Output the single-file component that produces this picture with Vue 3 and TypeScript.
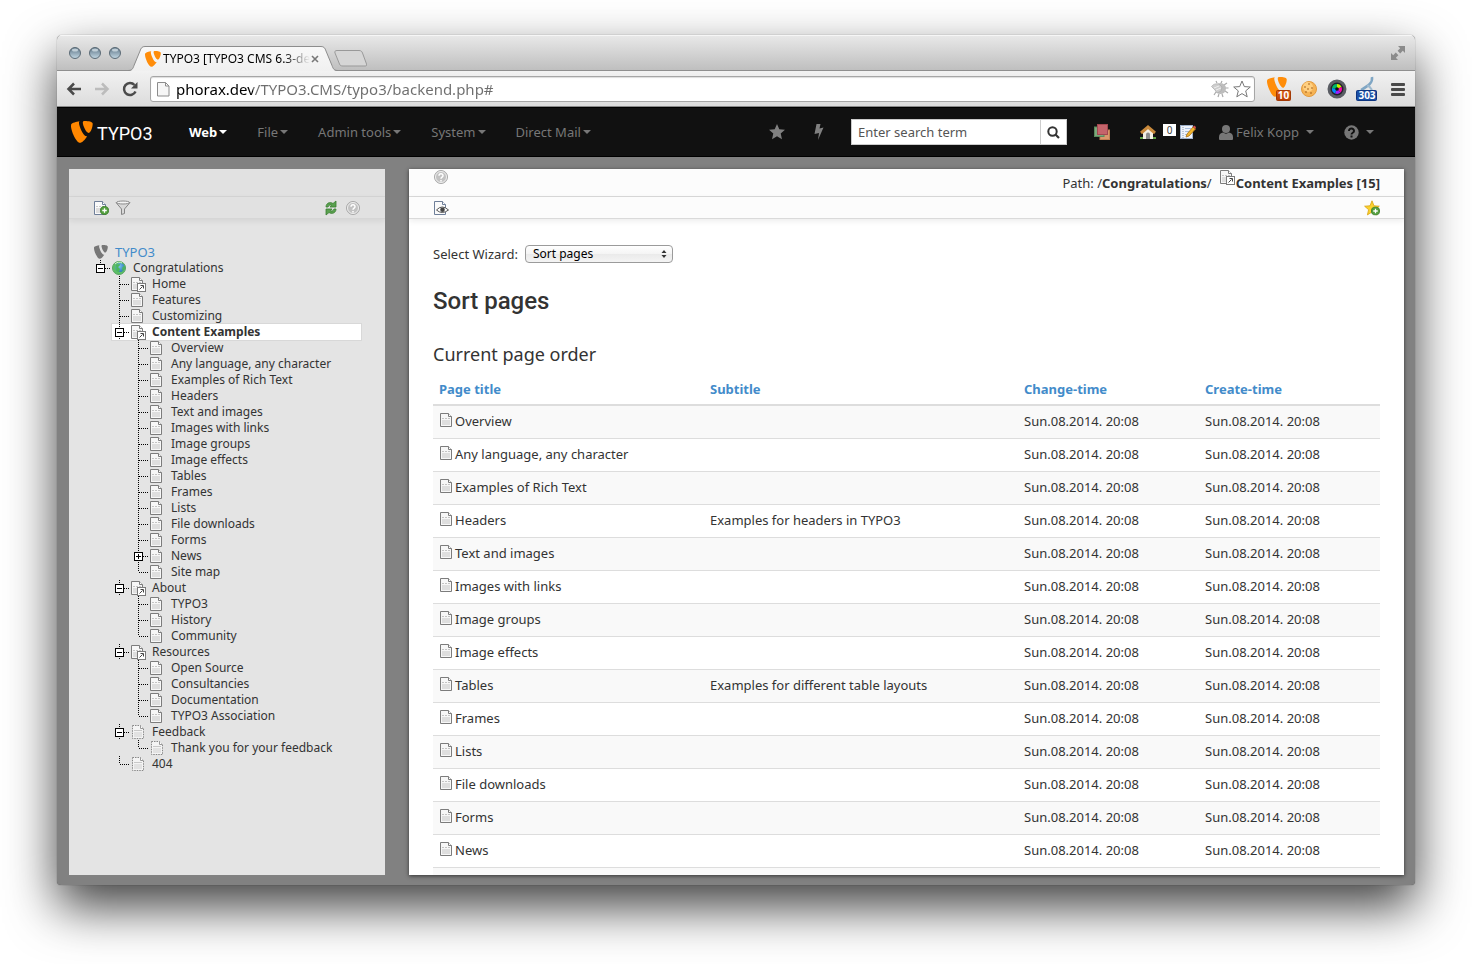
<script setup lang="ts">
import { ref } from 'vue'

type Joint = 'tee' | 'end' | 'minus' | 'minus-first' | 'plus'

interface TreeNode {
  label: string
  level: 1 | 2 | 3
  joint: Joint
  icon: string
  active?: boolean
}

interface PageRow {
  title: string
  subtitle: string
}

const leaf = (label: string, joint: Joint = 'tee', icon = 'page'): TreeNode => ({ label, level: 3, joint, icon })

const tree: TreeNode[] = [
  { label: 'Congratulations', level: 1, joint: 'minus-first', icon: 'globe' },
  { label: 'Home', level: 2, joint: 'tee', icon: 'shortcut' },
  { label: 'Features', level: 2, joint: 'tee', icon: 'page' },
  { label: 'Customizing', level: 2, joint: 'tee', icon: 'page' },
  { label: 'Content Examples', level: 2, joint: 'minus', icon: 'shortcut', active: true },
  leaf('Overview'),
  leaf('Any language, any character'),
  leaf('Examples of Rich Text'),
  leaf('Headers'),
  leaf('Text and images'),
  leaf('Images with links'),
  leaf('Image groups'),
  leaf('Image effects'),
  leaf('Tables'),
  leaf('Frames'),
  leaf('Lists'),
  leaf('File downloads'),
  leaf('Forms'),
  leaf('News', 'plus'),
  leaf('Site map', 'end'),
  { label: 'About', level: 2, joint: 'minus', icon: 'shortcut' },
  leaf('TYPO3'),
  leaf('History'),
  leaf('Community', 'end'),
  { label: 'Resources', level: 2, joint: 'minus', icon: 'shortcut' },
  leaf('Open Source'),
  leaf('Consultancies'),
  leaf('Documentation'),
  leaf('TYPO3 Association', 'end'),
  { label: 'Feedback', level: 2, joint: 'minus', icon: 'hidden' },
  leaf('Thank you for your feedback', 'end', 'hidden'),
  { label: '404', level: 2, joint: 'end', icon: 'hidden' },
]

const subtitles: Record<string, string> = {
  Headers: 'Examples for headers in TYPO3',
  Tables: 'Examples for different table layouts',
}

const rows: PageRow[] = [
  'Overview',
  'Any language, any character',
  'Examples of Rich Text',
  'Headers',
  'Text and images',
  'Images with links',
  'Image groups',
  'Image effects',
  'Tables',
  'Frames',
  'Lists',
  'File downloads',
  'Forms',
  'News',
].map((title) => ({ title, subtitle: subtitles[title] ?? '' }))

const stamp = 'Sun.08.2014. 20:08'
const menus: string[] = ['Web', 'File', 'Admin tools', 'System', 'Direct Mail']
const address = ref('phorax.dev/TYPO3.CMS/typo3/backend.php#')
const wizard = ref('Sort pages')
const search = ref('')
</script>

<template>
  <svg class="defs" aria-hidden="true">
    <defs>
      <linearGradient id="lens" x1="0" y1="0" x2="0" y2="1">
        <stop offset="0" stop-color="#5d7385" />
        <stop offset="1" stop-color="#c3d8e4" />
      </linearGradient>
      <linearGradient id="tab-fill" x1="0" y1="0" x2="0" y2="1">
        <stop offset="0" stop-color="#f8f8f8" />
        <stop offset="1" stop-color="#f0f0f0" />
      </linearGradient>
      <linearGradient id="badge-orange" x1="0" y1="0" x2="0" y2="1">
        <stop offset="0" stop-color="#e0621c" />
        <stop offset="1" stop-color="#b83c00" />
      </linearGradient>
      <radialGradient id="sea" cx=".4" cy=".35" r=".7">
        <stop offset="0" stop-color="#7fc4f0" />
        <stop offset="1" stop-color="#2a78b8" />
      </radialGradient>
      <symbol id="typo3" viewBox="0 0 22 22">
        <path d="M16.2 15.200c-.3.1-.6.1-1 .1-3 0-7.200-10.200-7.200-13.200 0-1.100.3-1.500.7-1.800C5.100.7 1.200 1.900.2 3.300c-.1.4-.2.9-.2 1.700C0 9.700 5.200 21.800 9 21.800c2 0 5-3.100 7.200-6.600M13.900 0c3.500 0 7.800.6 7.800 2.700 0 4.200-2.400 9.200-4 9.200-2.600 0-5.900-7.400-5.900-10.400 0-1.300.8-1.500 2.100-1.500" />
      </symbol>
      <symbol id="page" viewBox="0 0 16 16">
        <path d="M.5 1.500h8l3 3v10H.5z" fill="#f7f7f7" stroke="#7c7c7c" />
        <path d="M8.500 1.500v3h3" fill="#fff" stroke="#7c7c7c" />
        <path d="M2 6.500h8" stroke="#c4c4c4" stroke-dasharray="2 1" />
        <path d="M2 8h8v5H2z" fill="#dedede" />
      </symbol>
      <symbol id="shortcut" viewBox="0 0 16 16">
        <use href="#page" width="16" height="16" />
        <rect x="6.500" y="7.500" width="8" height="8" fill="#fff" stroke="#7b7b7b" />
        <path d="M8.500 13.500l3-3M9.500 9.500h3v3" fill="none" stroke="#444" />
      </symbol>
      <symbol id="hidden" viewBox="0 0 16 16">
        <path d="M1.500 1.500h8l3 3v10h-11z" fill="#f4f4f4" stroke="#888" stroke-dasharray="1.500 1" />
        <path d="M9.500 1.500v3h3" fill="#fff" stroke="#999" />
        <path d="M3 6.500h8" stroke="#c8c8c8" />
        <path d="M3 8h8v5H3z" fill="#e2e2e2" />
      </symbol>
      <symbol id="globe" viewBox="0 0 16 16">
        <circle cx="7" cy="8" r="6.500" fill="#5cbf66" stroke="#55a35f" />
        <circle cx="8" cy="7.500" r="4.500" fill="url(#sea)" />
        <path d="M4 4.500L8 4 7.500 6 6 7l2 2-1 3-2.500-1zM10.500 7l2-1v3L10 11z" fill="#4cb857" />
        <path d="M3 4c2-2 5-2.500 7-1" stroke="#d4f4cf" fill="none" />
      </symbol>
      <symbol id="help" viewBox="0 0 16 16">
        <circle cx="8" cy="8" r="6.500" fill="#c2c2c2" stroke="#a8a8a8" />
        <circle cx="8" cy="8" r="5.500" fill="none" stroke="#eee" />
        <path d="M6 6.800c0-3 4.200-2.500 4 0C10 8.200 8 8 8 9.800M8 11v1.500" fill="none" stroke="#fff" stroke-width="1.500" />
      </symbol>
      <symbol id="plus-dot" viewBox="0 0 10 10">
        <circle cx="5" cy="5" r="4.500" fill="#55a040" stroke="#3d7f2c" />
        <path d="M5 2.500v5M2.500 5h5" stroke="#fff" stroke-width="1.400" />
      </symbol>
    </defs>
  </svg>

  <div class="desktop">
    <div class="window">
      <header class="titlebar">
        <div class="lights">
          <button v-for="name in ['Close', 'Minimise', 'Zoom']" :key="name" type="button" :aria-label="name">
            <svg width="14" height="14" viewBox="0 0 14 14">
              <circle cx="7" cy="7" r="5.500" fill="url(#lens)" stroke="#5c6b76" />
              <ellipse cx="7" cy="4" rx="3" ry="1.500" fill="#dfe9ef" opacity=".7" />
            </svg>
          </button>
        </div>
        <div class="tab">
          <svg class="tab-shape" width="210" height="25" viewBox="0 0 210 25" aria-hidden="true">
            <path d="M0 25c4 0 5-2 6-5L12 5c1-3 2-4.500 5-4.500h176c3 0 4 1.500 5 4.500l6 15c1 3 2 5 6 5z" fill="url(#tab-fill)" />
            <path d="M0 24.500c4 0 5-2 6-5L12 5c1-3 2-4.500 5-4.500h176c3 0 4 1.500 5 4.500l6 14.500c1 3 2 5 6 5" fill="none" stroke="#8d8d8d" />
          </svg>
          <div class="tab-body">
            <svg class="orange" width="16" height="16"><use href="#typo3" /></svg>
            <span class="tab-title">TYPO3 [TYPO3 CMS 6.3-de</span>
            <button type="button" aria-label="Close tab">
              <svg width="8" height="8" viewBox="0 0 8 8"><path d="M1 1l6 6M7 1L1 7" stroke="#777" stroke-width="1.600" /></svg>
            </button>
          </div>
        </div>
        <button class="new-tab" type="button" aria-label="New tab">
          <svg width="33" height="17" viewBox="0 0 33 17">
            <path d="M3 .5h22c2 0 3 1 3.500 2.500l4 11c.4 1.500 0 2-1.500 2H9c-2 0-3-.5-3.500-2L1 3C.5 1.500 1 .5 3 .5z" fill="#d6d6d6" stroke="#999" />
          </svg>
        </button>
        <button class="expand" type="button" aria-label="Full screen">
          <svg width="16" height="16" viewBox="0 0 16 16" fill="#8b8b8b">
            <path d="M8 1h7v7l-2.200-2.200-2.600 2.600-2.600-2.600 2.600-2.600zM1 8l2.200 2.200 2.600-2.600 2.600 2.600-2.600 2.600L8 15H1z" />
          </svg>
        </button>
      </header>

      <div class="toolbar">
        <button type="button" aria-label="Back">
          <svg width="16" height="16" viewBox="0 0 16 16"><path d="M15 8H3M8 2.500L2.500 8 8 13.500" fill="none" stroke="#4a4a4a" stroke-width="2.500" /></svg>
        </button>
        <button type="button" aria-label="Forward">
          <svg width="16" height="16" viewBox="0 0 16 16"><path d="M1 8h12M8 2.500L13.500 8 8 13.500" fill="none" stroke="#bcbcbc" stroke-width="2.500" /></svg>
        </button>
        <button type="button" aria-label="Reload">
          <svg width="16" height="16" viewBox="0 0 16 16">
            <path d="M13.500 10.500A6 6 0 1 1 12.500 4" fill="none" stroke="#4a4a4a" stroke-width="2.500" />
            <path d="M15.500 1v6.500H9z" fill="#4a4a4a" />
          </svg>
        </button>
        <div class="omnibox">
          <svg width="13" height="16" viewBox="0 0 13 16"><path d="M.5 1.500h8l3.500 3.500v10H.5zM8.500 1.500V5H12" fill="#f6f6f6" stroke="#8c8c8c" /></svg>
          <input v-model="address" type="text" aria-label="Address" />
          <svg width="18" height="18" viewBox="0 0 18 18">
            <path d="M6 3L5 1M10 3l1-2M13 5l3-2M14 8h3.500M14 11l3 2M11 14l1 3M8 14l-1 3M5 12l-2 3" stroke="#a9a9a9" stroke-width="1.200" />
            <circle cx="9.500" cy="8.500" r="5.500" fill="#bdbdbd" />
            <path d="M.5 6.500Q3 3 8 4l3 3-1 4-4 2-2-3z" fill="#cdcdcd" stroke="#aaa" stroke-width=".7" />
            <path d="M3 8l5-2M5 10l5-2" stroke="#eee" />
          </svg>
          <svg width="18" height="18" viewBox="0 0 18 18"><path d="M9 1l2.300 5.600 6 .4-4.600 3.900 1.500 5.900L9 13.600l-5.200 3.200 1.500-5.900L.7 7l6-.4z" fill="#fff" stroke="#777" stroke-linejoin="round" /></svg>
        </div>
        <div class="extensions">
          <button type="button" class="ext" aria-label="TYPO3 issues">
            <svg width="24" height="26" viewBox="0 0 24 26">
              <use href="#typo3" x="0" y="1" width="20" height="20" fill="#ff8d0a" />
              <rect x="9.500" y="14.500" width="14" height="10" rx="1" fill="url(#badge-orange)" stroke="#a33a06" />
            </svg>
            <span class="badge">10</span>
          </button>
          <button type="button" aria-label="Cookies">
            <svg width="18" height="18" viewBox="0 0 18 18">
              <circle cx="9" cy="9" r="7.500" fill="#f5b355" stroke="#e39a3c" />
              <circle cx="8" cy="7" r="5" fill="#ffcf80" />
              <g fill="#9a5413"><circle cx="5" cy="7" r=".8" /><circle cx="9" cy="4" r=".8" /><circle cx="12" cy="8" r=".8" /><circle cx="8" cy="9" r=".8" /><circle cx="6" cy="12" r=".8" /><circle cx="11" cy="13" r=".8" /></g>
            </svg>
          </button>
          <button type="button" aria-label="Colour picker">
            <svg width="20" height="20" viewBox="0 0 20 20">
              <circle cx="10" cy="10" r="8" fill="#22242a" stroke="#5a5d64" stroke-width="3" />
              <path d="M10 10V5a5 5 0 0 1 4.500 3z" fill="#c8f000" /><path d="M10 10l4.500-2a5 5 0 0 1-1 5.500z" fill="#f0a" />
              <path d="M10 10l3.500 3.500A5 5 0 0 1 8 14.500z" fill="#92f" /><path d="M10 10l-2 4.500A5 5 0 0 1 5 9z" fill="#08f" /><path d="M10 10L5 9a5 5 0 0 1 5-4z" fill="#0b6" />
              <circle cx="10" cy="10" r="1.800" fill="#111" />
            </svg>
          </button>
          <button type="button" class="ext" aria-label="Feed">
            <svg width="22" height="26" viewBox="0 0 22 26">
              <path d="M16 1c1 6-4 9-11 13" fill="none" stroke="#7fa6c4" stroke-width="2.500" /><path d="M11 9c2 1 4 3 5 5" fill="none" stroke="#9db9cf" stroke-width="2" />
              <rect x=".5" y="14.500" width="20" height="10" rx="1" fill="#1b4fa5" stroke="#0d3580" />
            </svg>
            <span class="badge wide">303</span>
          </button>
          <button type="button" aria-label="Menu">
            <svg width="14" height="14" viewBox="0 0 14 14" fill="#4a4a4a"><rect y="1" width="14" height="3" rx="1" /><rect y="6" width="14" height="3" rx="1" /><rect y="11" width="14" height="3" rx="1" /></svg>
          </button>
        </div>
      </div>

      <div class="topbar">
        <a class="brand" href="#">
          <svg width="22" height="22"><use href="#typo3" /></svg>
          <span>TYPO3</span>
        </a>
        <nav class="menus">
          <button v-for="(menu, i) in menus" :key="menu" type="button" :class="{ current: i === 0 }">{{ menu }}<i class="caret"></i></button>
        </nav>
        <div class="tools">
          <button type="button" class="star" aria-label="Bookmarks">
            <svg width="16" height="16" viewBox="0 0 16 16"><path d="M8 0l2.300 5.300 5.700.5-4.300 3.800L13 15.300 8 12.300l-5 3 1.300-5.700L0 5.800l5.700-.5z" fill="#808080" /></svg>
          </button>
          <button type="button" class="bolt" aria-label="Clear cache">
            <svg width="10" height="16" viewBox="0 0 10 16"><path d="M2.500 0h4L5.500 4.500l4-1L4 16l1-7-4.500 1z" fill="#808080" /></svg>
          </button>
          <form class="search" @submit.prevent>
            <input v-model="search" type="text" placeholder="Enter search term" aria-label="Search" />
            <button type="submit" aria-label="Search">
              <svg width="13" height="13" viewBox="0 0 13 13"><circle cx="5.500" cy="5.500" r="4.200" fill="none" stroke="#333" stroke-width="2" /><path d="M8.500 8.500L12 12" stroke="#333" stroke-width="2.200" /></svg>
            </button>
          </form>
          <button type="button" class="workspace" aria-label="Workspaces">
            <svg width="16" height="16" viewBox="0 0 16 16">
              <rect x="6" y="6" width="9.500" height="9.500" fill="#d9986c" stroke="#c07d50" /><rect x=".5" y="3" width="9.500" height="9.500" fill="#7ba87b" stroke="#5c8a5c" /><rect x="3.500" y=".5" width="10" height="10" fill="#c5646b" stroke="#a34850" />
            </svg>
          </button>
          <button type="button" class="house" aria-label="Live view">
            <svg width="16" height="16" viewBox="0 0 16 16">
              <path d="M0 15h16v-2H0z" fill="#5fa345" /><path d="M3 8l5-5 5 5v7H3z" fill="#f3efe4" /><path d="M6 10.500a2 2 0 0 1 4 0V15H6z" fill="#8c8c8c" />
              <path d="M1 9l7-6 7 6" fill="none" stroke="#c98a3c" stroke-width="3" />
            </svg>
          </button>
          <span class="count">0</span>
          <button type="button" class="note" aria-label="Tasks">
            <svg width="16" height="15" viewBox="0 0 16 15">
              <rect x=".5" y=".5" width="12" height="13" fill="#eef3fb" stroke="#9fb2cc" /><path d="M3 0v14" stroke="#8c9bb0" stroke-dasharray="1 1" /><path d="M5 3.500h6M5 6.500h5M5 9.500h3" stroke="#a9bfdf" />
              <path d="M6 12l1-3 6-7 2.500 2-6.500 7z" fill="#f1b52e" stroke="#a86f14" stroke-width=".8" /><path d="M13 2l1-1.500L16 2l-.8 2z" fill="#d9534f" />
            </svg>
          </button>
          <button type="button" class="user">
            <svg width="14" height="15" viewBox="0 0 14 15" fill="#777"><circle cx="7" cy="4" r="4" /><path d="M0 14v-2c0-3 2-4 4-4.500 2 1.500 4 1.500 6 0 2 .5 4 1.500 4 4.500v2q0 1-1 1H1q-1 0-1-1z" /></svg>
            <span>Felix Kopp</span><i class="caret"></i>
          </button>
          <button type="button" class="about" aria-label="Help">
            <svg width="15" height="15" viewBox="0 0 15 15"><circle cx="7.500" cy="7.500" r="7.200" fill="#777" /><path d="M5 6c0-3.500 5.200-3 5 0 0 2-2.500 1.500-2.500 3.500M7.500 10.500v2" fill="none" stroke="#111" stroke-width="2" /></svg>
            <i class="caret"></i>
          </button>
        </div>
      </div>

      <div class="workarea">
        <aside class="pagetree">
          <div class="path-row"></div>
          <div class="button-row">
            <button type="button" aria-label="New page">
              <svg width="16" height="16" viewBox="0 0 16 16">
                <path d="M1.500 1.500h8l3 3v10h-11z" fill="#fafafa" stroke="#6f7f99" /><path d="M9.500 1.500v3h3" fill="#fff" stroke="#6f7f99" /><path d="M3 6.500h8" stroke="#ccc" stroke-dasharray="2 1" /><path d="M3 8h6v5H3z" fill="#ddd" />
                <use href="#plus-dot" x="7" y="6" width="9" height="9" />
              </svg>
            </button>
            <button type="button" aria-label="Filter">
              <svg width="16" height="16" viewBox="0 0 16 16"><path d="M1 2.500L6.500 9v5.500l3-1V9L15 2.500z" fill="#d8d8d8" stroke="#858585" /><ellipse cx="8" cy="2.500" rx="6.500" ry="1.500" fill="#f4f4f4" stroke="#8c8c8c" /></svg>
            </button>
            <span class="spacer"></span>
            <button type="button" aria-label="Refresh">
              <svg width="16" height="16" viewBox="0 0 16 16"><path d="M3 7C3 3 7 1.500 10 3.500L13 1v6H7l1.500-1.800C7 4.500 5.500 5.500 5 7zM13 9c0 4-4 5.500-7 3.500L3 15V9h6l-1.500 1.800c1.500.7 3-.3 3.500-1.800z" fill="#5aa14f" stroke="#3b7d33" stroke-width=".8" /></svg>
            </button>
            <button type="button" aria-label="Help">
              <svg width="16" height="16"><use href="#help" /></svg>
            </button>
          </div>
          <ul class="tree">
            <li class="root">
              <svg class="icon grey" width="14" height="14"><use href="#typo3" /></svg>
              <a href="#">TYPO3</a>
            </li>
            <li v-for="node in tree" :key="node.level + node.label" :class="['level-' + node.level, { active: node.active }]">
              <svg class="joint" width="19" height="16" viewBox="0 0 19 16" shape-rendering="crispEdges" aria-hidden="true">
                <g fill="none" stroke="#000" stroke-dasharray="1 1">
                  <path v-if="node.joint === 'end'" d="M7.500 0v8" />
                  <path v-else-if="node.joint === 'minus-first'" d="M7.500 0v4" />
                  <path v-else d="M7.500 0v16" />
                  <path d="M8 8.500h10" />
                </g>
                <template v-if="node.joint.startsWith('minus') || node.joint === 'plus'">
                  <rect x="3.500" y="4.500" width="8" height="8" fill="#fff" stroke="#000" />
                  <path d="M5 8.500h5" stroke="#000" />
                  <path v-if="node.joint === 'plus'" d="M7.500 6v5" stroke="#000" />
                </template>
              </svg>
              <svg class="icon" width="16" height="16"><use :href="'#' + node.icon" /></svg>
              <a href="#">{{ node.label }}</a>
            </li>
          </ul>
        </aside>

        <main class="module">
          <div class="path-row">
            <button type="button" aria-label="Help">
              <svg width="16" height="16"><use href="#help" /></svg>
            </button>
            <div class="path">
              <span>Path: /<b>Congratulations</b>/</span>
              <svg width="16" height="16"><use href="#shortcut" /></svg>
              <b>Content Examples [15]</b>
            </div>
          </div>
          <div class="button-row">
            <button type="button" aria-label="View page">
              <svg width="16" height="16" viewBox="0 0 16 16">
                <path d="M1.500 1.500h8l3 3v10h-11z" fill="#fafafa" stroke="#6f7f99" /><path d="M9.500 1.500v3h3" fill="#fff" stroke="#6f7f99" />
                <path d="M3.500 10q5.500-6 12 0-6.500 5-12 0z" fill="#fff" stroke="#555" /><circle cx="9.500" cy="9.800" r="2.300" fill="#444" />
              </svg>
            </button>
            <span class="spacer"></span>
            <button type="button" aria-label="Create bookmark">
              <svg width="16" height="16" viewBox="0 0 16 16">
                <path d="M8 .8l2 5 5.300.4-4 3.500 1.200 5.200L8 12l-4.600 2.900 1.200-5.200-4-3.500L6 5.800z" fill="#fbd22e" stroke="#d9a213" stroke-width=".8" />
                <use href="#plus-dot" x="7" y="6.500" width="9" height="9" />
              </svg>
            </button>
          </div>
          <div class="content">
            <div class="wizard">
              <label for="wizard">Select Wizard:</label>
              <div class="select-box">
                <select id="wizard" v-model="wizard">
                  <option>Sort pages</option>
                  <option>Create multiple pages</option>
                </select>
                <svg width="6" height="8" viewBox="0 0 6 8" aria-hidden="true"><path d="M3 0l2.500 3h-5zM3 8L.5 5h5z" fill="#333" /></svg>
              </div>
            </div>
            <h1>Sort pages</h1>
            <h2>Current page order</h2>
            <table>
              <thead>
                <tr>
                  <th class="c-title"><a href="#">Page title</a></th>
                  <th><a href="#">Subtitle</a></th>
                  <th class="c-time"><a href="#">Change-time</a></th>
                  <th class="c-time"><a href="#">Create-time</a></th>
                </tr>
              </thead>
              <tbody>
                <tr v-for="row in rows" :key="row.title">
                  <td>
                    <div class="cell">
                      <svg width="16" height="16"><use href="#page" /></svg>
                      <span>{{ row.title }}</span>
                    </div>
                  </td>
                  <td>{{ row.subtitle }}</td>
                  <td>{{ stamp }}</td>
                  <td>{{ stamp }}</td>
                </tr>
              </tbody>
              <tfoot>
                <tr>
                  <td colspan="4"></td>
                </tr>
              </tfoot>
            </table>
          </div>
        </main>
      </div>
    </div>
  </div>
</template>

<style>
body {
  margin: 0;
  background: #fff;
}
</style>

<style scoped>
.defs {
  position: absolute;
  width: 0;
  height: 0;
}
.desktop {
  box-sizing: border-box;
  height: 100vh;
  padding: 35px 57px 79px;
  overflow: hidden;
  font-family: 'Noto Sans', 'Open Sans', sans-serif;
  font-size: 13px;
  line-height: 18px;
  color: #333;
}
.window {
  display: flex;
  flex-direction: column;
  height: 100%;
  border-radius: 5px 5px 4px 4px;
  overflow: hidden;
  background: #818181;
  box-shadow: 0 0 1px rgba(0, 0, 0, 0.6), 0 22px 50px rgba(0, 0, 0, 0.75);
}
button {
  display: flex;
  align-items: center;
  padding: 0;
  border: 0;
  background: none;
  font: inherit;
  color: inherit;
}
svg {
  display: block;
  flex: none;
}
a {
  color: inherit;
  text-decoration: none;
}

/* Browser chrome */
.titlebar {
  flex: none;
  display: flex;
  align-items: flex-end;
  height: 35px;
  padding: 0 9px 0 11px;
  border-bottom: 1px solid #8f8f8f;
  background: linear-gradient(#e9e9e9, #bfbfbf);
  box-shadow: inset 0 1px #f6f6f6;
}
.lights {
  display: flex;
  gap: 6px;
  align-self: center;
}
.tab {
  position: relative;
  width: 210px;
  height: 25px;
  margin: 0 -4px -1px 6px;
}
.tab-shape {
  position: absolute;
  inset: 0;
}
.tab-body {
  position: relative;
  display: flex;
  align-items: center;
  height: 25px;
  padding: 0 19px 0 17px;
}
.orange {
  fill: #ff8d0a;
}
.tab-title {
  margin-left: 2px;
  white-space: nowrap;
  font-size: 12px;
  color: #000;
  mask-image: linear-gradient(to right, #000 82%, transparent);
}
.tab-body button {
  margin-left: auto;
}
.new-tab {
  margin-bottom: 3px;
}
.expand {
  margin-left: auto;
  align-self: center;
}
.toolbar {
  flex: none;
  display: flex;
  align-items: center;
  box-sizing: border-box;
  height: 36px;
  padding: 0 10px 0 9px;
  gap: 12px;
  border-bottom: 1px solid #8a8a8a;
  background: linear-gradient(#f2f2f2, #dcdcdc);
}
.omnibox {
  flex: 1;
  display: flex;
  align-items: center;
  box-sizing: border-box;
  height: 26px;
  padding: 0 3px 0 6px;
  gap: 4px;
  border: 1px solid #a6a6a6;
  border-radius: 3px;
  background: #fff;
  box-shadow: inset 0 1px 1px #ddd;
}
.omnibox input {
  flex: 1;
  min-width: 0;
  padding: 0;
  margin-left: 2px;
  border: 0;
  outline: 0;
  font: 15px/22px 'Noto Sans', sans-serif;
  color: transparent;
  background: linear-gradient(to right, #000 77px, #6e6e6e 77px);
  background-clip: text;
}
.extensions {
  display: flex;
  align-items: center;
  gap: 9px;
}
.extensions button:last-child {
  margin-left: 4px;
}
.ext {
  position: relative;
}
.badge {
  position: absolute;
  right: 0;
  bottom: 1px;
  width: 15px;
  font: bold 10px/11px 'Noto Sans', sans-serif;
  text-align: center;
  color: #fff;
}
.badge.wide {
  width: 22px;
}

/* Backend top bar */
.topbar {
  flex: none;
  display: flex;
  align-items: center;
  box-sizing: border-box;
  height: 50px;
  padding: 0 41px 0 14px;
  border-top: 1px solid #000;
  border-bottom: 1px solid #000;
  background: #111;
  color: #777;
}
.brand {
  display: flex;
  align-items: flex-end;
  gap: 4px;
  width: 118px;
  font: 18px/18px Roboto, sans-serif;
  color: #fff;
}
.brand svg {
  fill: #ff8700;
}
.menus {
  display: flex;
  gap: 30px;
}
.menus .current {
  font-weight: bold;
  color: #fff;
}
.caret {
  margin-left: 2px;
  border: 4px solid transparent;
  border-top-color: currentColor;
  border-bottom: 0;
}
.tools {
  display: flex;
  align-items: center;
  margin-left: auto;
}
.bolt {
  margin-left: 29px;
}
.search {
  display: flex;
  margin-left: 27px;
  border: 1px solid #ccc;
  background: #fff;
}
.search input {
  width: 182px;
  height: 24px;
  padding: 0 0 0 6px;
  border: 0;
  border-right: 1px solid #ccc;
  outline: 0;
  font: 13px/18px 'Noto Sans', sans-serif;
  color: #555;
}
.search input::placeholder {
  color: #555;
  opacity: 1;
}
.search button {
  width: 25px;
  justify-content: center;
}
.workspace {
  margin-left: 27px;
}
.house {
  margin-left: 30px;
}
.count {
  width: 13px;
  margin: 0 4px 4px 7px;
  background: #fff;
  font-size: 10px;
  line-height: 12px;
  text-align: center;
  color: #444;
}
.user {
  margin-left: 23px;
  gap: 3px;
}
.user .caret {
  margin-left: 4px;
}
.about {
  margin-left: 30px;
  gap: 5px;
}

/* Panels */
.workarea {
  flex: 1;
  display: flex;
  min-height: 0;
  gap: 24px;
  padding: 12px 11px 10px 12px;
}
.pagetree {
  flex: none;
  width: 316px;
  overflow: hidden;
  background: #e4e4e4;
}
.module {
  flex: 1;
  min-width: 0;
  overflow: hidden;
  background: #fff;
  box-shadow: 0 1px 4px rgba(0, 0, 0, 0.6);
}
.path-row,
.button-row {
  display: flex;
  box-sizing: border-box;
  padding: 0 24px;
  border-bottom: 1px solid #dadada;
  background: #fcfcfc;
}
.path-row {
  height: 28px;
}
.path-row button {
  align-self: flex-start;
}
.button-row {
  align-items: center;
  height: 22px;
  gap: 6px;
  box-shadow: 0 2px 6px rgba(0, 0, 0, 0.08);
}
.pagetree .path-row,
.pagetree .button-row {
  background: #e1e1e1;
  border-color: #d6d6d6;
}
.spacer {
  flex: 1;
}
.path {
  display: flex;
  margin-left: auto;
  padding-top: 5px;
}
.path svg {
  margin: -5px 0 0 8px;
}

/* Page tree */
.tree {
  margin: 0;
  padding: 25px 24px 0;
  list-style: none;
  font-size: 12px;
  line-height: 16px;
}
.tree li {
  display: flex;
  align-items: center;
  height: 16px;
}
.tree .icon {
  width: 16px;
  margin-right: 5px;
}
.tree .root .icon {
  width: 14px;
  margin: 0 7px 0 1px;
}
.grey {
  fill: #777;
}
.root a {
  font-size: 13px;
  color: #428bca;
}
.tree .level-2 {
  margin-left: 19px;
}
.tree .level-3 {
  margin-left: 38px;
}
.active {
  background: #fff;
  box-shadow: 0 0 0 1px #d8d8d8;
  font-weight: bold;
}

/* Module content */
.content {
  padding: 26px 24px 0;
}
.wizard {
  display: flex;
  align-items: center;
  gap: 7px;
}
.select-box {
  position: relative;
}
.select-box select {
  display: block;
  appearance: none;
  width: 148px;
  height: 18px;
  padding: 0 20px 0 7px;
  border: 1px solid #9b9b9b;
  border-radius: 4px;
  background: linear-gradient(#fff, #f4f4f4 50%, #eaeaea 50%, #f4f4f4);
  font: 12px/14px 'Noto Sans', sans-serif;
  color: #000;
}
.select-box svg {
  position: absolute;
  top: 5px;
  right: 6px;
  pointer-events: none;
}
h1 {
  margin: 23px 0 26px;
  font: 500 24px/30px Roboto, sans-serif;
}
h2 {
  margin: 0 0 8px;
  font-size: 18px;
  font-weight: normal;
  line-height: 24px;
}
table {
  width: 100%;
  table-layout: fixed;
  border-collapse: separate;
  border-spacing: 0;
}
th {
  box-sizing: border-box;
  padding: 6px;
  border-bottom: 2px solid #ddd;
  text-align: left;
  color: #428bca;
}
td {
  height: 18px;
  padding: 6px 6px 8px;
  border-bottom: 1px solid #ddd;
}
tbody tr:nth-child(odd),
tfoot tr {
  background: #f9f9f9;
}
.c-title {
  width: 271px;
}
.c-time {
  width: 181px;
}
.cell {
  display: flex;
}
.cell svg {
  margin: 0 -1px 0 1px;
}
</style>
